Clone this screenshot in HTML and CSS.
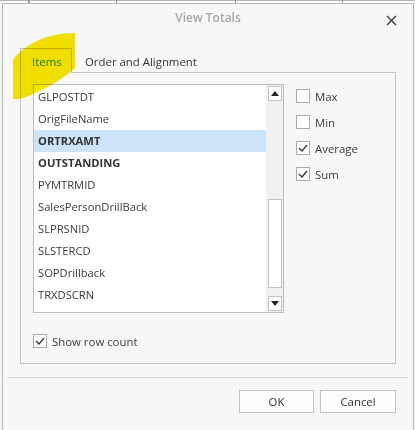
FILE: index.html
```html
<!DOCTYPE html>
<html>
<head>
<meta charset="utf-8">
<link rel="stylesheet" href="styles.css">
</head>
<body>
<div class="sheet"></div>
<div class="dialog">
  <div class="header">
    <span></span>
    <div class="title">View Totals</div>
    <button class="close" aria-label="Close">
      <svg width="11" height="11" viewBox="0 0 11 11"><path d="M1 1 L10 10 M10 1 L1 10" stroke="#3a3a3a" stroke-width="1.4" fill="none"/></svg>
    </button>
  </div>
  <div class="tabs">
    <div class="tab active">Items</div>
    <div class="tab">Order and Alignment</div>
  </div>
  <div class="panel">
    <div class="panel-row">
      <div class="listbox">
        <ul class="items">
          <li>GLPOSTDT</li>
          <li>OrigFileName</li>
          <li class="bold selected">ORTRXAMT</li>
          <li class="bold">OUTSTANDING</li>
          <li>PYMTRMID</li>
          <li>SalesPersonDrillBack</li>
          <li>SLPRSNID</li>
          <li>SLSTERCD</li>
          <li>SOPDrillback</li>
          <li>TRXDSCRN</li>
        </ul>
        <div class="scrollbar">
          <div class="sbtn"><svg width="8" height="5" viewBox="0 0 8 5"><path d="M0 5 L4 0 L8 5 Z" fill="#222"/></svg></div>
          <div class="thumb"></div>
          <div class="sbtn down"><svg width="8" height="5" viewBox="0 0 8 5"><path d="M0 0 L8 0 L4 5 Z" fill="#222"/></svg></div>
        </div>
      </div>
      <div class="checks">
        <label class="check"><span class="box"></span>Max</label>
        <label class="check"><span class="box"></span>Min</label>
        <label class="check"><span class="box"><svg width="12" height="12" viewBox="0 0 12 12"><path d="M2 6 L5 9 L10 3" stroke="#333" stroke-width="1.3" fill="none"/></svg></span>Average</label>
        <label class="check"><span class="box"><svg width="12" height="12" viewBox="0 0 12 12"><path d="M2 6 L5 9 L10 3" stroke="#333" stroke-width="1.3" fill="none"/></svg></span>Sum</label>
      </div>
    </div>
    <label class="check rowcount"><span class="box"><svg width="12" height="12" viewBox="0 0 12 12"><path d="M2 6 L5 9 L10 3" stroke="#333" stroke-width="1.3" fill="none"/></svg></span>Show row count</label>
  </div>
  <div class="separator"></div>
  <div class="buttons">
    <button class="btn">OK</button>
    <button class="btn">Cancel</button>
  </div>
</div>
<svg class="highlight" width="415" height="430" viewBox="0 0 415 430">
  <path d="M75 33 L75 68 C62 80 40 92 20 99 L13 99 L13 60 C24 44 48 33 75 33 Z" fill="#f7e600"/>
</svg>
</body>
</html>
```
FILE: styles.css
```css
* { box-sizing: border-box; }
html, body { margin: 0; padding: 0; }
body {
  width: 415px;
  height: 430px;
  overflow: hidden;
  background: #f4f4f4;
  font-family: "Open Sans", "Noto Sans", sans-serif;
  font-size: 11.5px;
  color: #333;
  position: relative;
}
.sheet {
  height: 3px;
  background:
    linear-gradient(90deg, transparent 0 28px, #9a9a9a 28px 30px, transparent 30px 116px, #9a9a9a 116px 117px, transparent 117px 235px, #9a9a9a 235px 236px, transparent 236px 342px, #9a9a9a 342px 343px, transparent 343px),
    linear-gradient(#b5b5b5 0 1px, #ffffff 1px);
}
.dialog {
  margin-left: 2px;
  width: 412px;
  height: 427px;
  background: #f7f7f7;
  border: 1px solid #b9b9b9;
  border-bottom: none;
  display: flex;
  flex-direction: column;
}
.header {
  height: 44px;
  display: grid;
  grid-template-columns: 1fr auto 1fr;
  align-items: start;
}
.title {
  padding-top: 5px;
  font-size: 12px;
  font-weight: 600;
  color: #a6a6a6;
  line-height: 18px;
}
.close {
  justify-self: end;
  margin: 11px 16px 0 0;
  padding: 0;
  border: none;
  background: none;
  width: 11px;
  height: 11px;
  display: flex;
}
.tabs {
  display: flex;
  padding-left: 17px;
  position: relative;
  z-index: 1;
  margin-bottom: -1px;
}
.tab {
  height: 25px;
  padding: 5px 12px 0 12px;
  line-height: 16px;
  font-size: 11.4px;
  color: #333;
  border: 1px solid transparent;
  border-bottom: none;
}
.tab.active {
  width: 52px;
  padding-left: 11px;
  border-color: #c2c2c2;
  background: #f7f7f7;
  color: #1c8ad6;
}
.panel {
  margin-left: 17px;
  width: 376px;
  height: 292px;
  border: 1px solid #c4c4c4;
  padding: 11px 12px 0 12px;
  display: flex;
  flex-direction: column;
}
.panel-row {
  display: flex;
  align-items: flex-start;
}
.listbox {
  width: 251px;
  height: 229px;
  border: 1px solid #bdbdbd;
  background: #fff;
  display: flex;
}
.items {
  list-style: none;
  margin: 0;
  padding: 1px 0 0 0;
  flex: 1;
}
.items li {
  height: 22px;
  line-height: 22px;
  padding-left: 4px;
  font-size: 11.2px;
  color: #3a3a3a;
  white-space: nowrap;
}
.items li.bold { font-weight: 700; color: #333; }
.items li.selected { background: #cce4f7; }
.scrollbar {
  width: 17px;
  background: #f0f0f0;
  display: flex;
  flex-direction: column;
  padding: 1px 1px 1px 2px;
}
.sbtn {
  height: 15px;
  background: #fff;
  border: 1px solid #c3c3c3;
  display: flex;
  align-items: center;
  justify-content: center;
}
.sbtn.down { margin-top: auto; }
.thumb {
  margin-top: 98px;
  height: 89px;
  background: #fff;
  border: 1px solid #c3c3c3;
}
.checks {
  margin-left: 12px;
  margin-top: -1px;
  display: flex;
  flex-direction: column;
}
.check {
  display: flex;
  align-items: center;
  height: 26px;
  font-size: 11.4px;
  color: #3a3a3a;
}
.box {
  width: 14px;
  height: 14px;
  border: 1px solid #a9a9a9;
  background: #fff;
  margin-right: 5px;
  display: flex;
  align-items: center;
  justify-content: center;
}
.rowcount {
  margin-top: 15px;
}
.separator {
  margin: 13px 5px 0 4px;
  height: 1px;
  background: #dcdcdc;
}
.buttons {
  display: flex;
  justify-content: flex-end;
  gap: 6px;
  padding-right: 17px;
  margin-top: 12px;
}
.btn {
  width: 75px;
  height: 23px;
  border: 1px solid #c3c3c3;
  background: #fdfdfd;
  font-family: inherit;
  font-size: 11.4px;
  color: #333;
  padding: 0;
}
.btn + .btn { width: 76px; }
.highlight {
  position: absolute;
  left: 0;
  top: 0;
  z-index: 2;
  pointer-events: none;
  mix-blend-mode: multiply;
}
```
